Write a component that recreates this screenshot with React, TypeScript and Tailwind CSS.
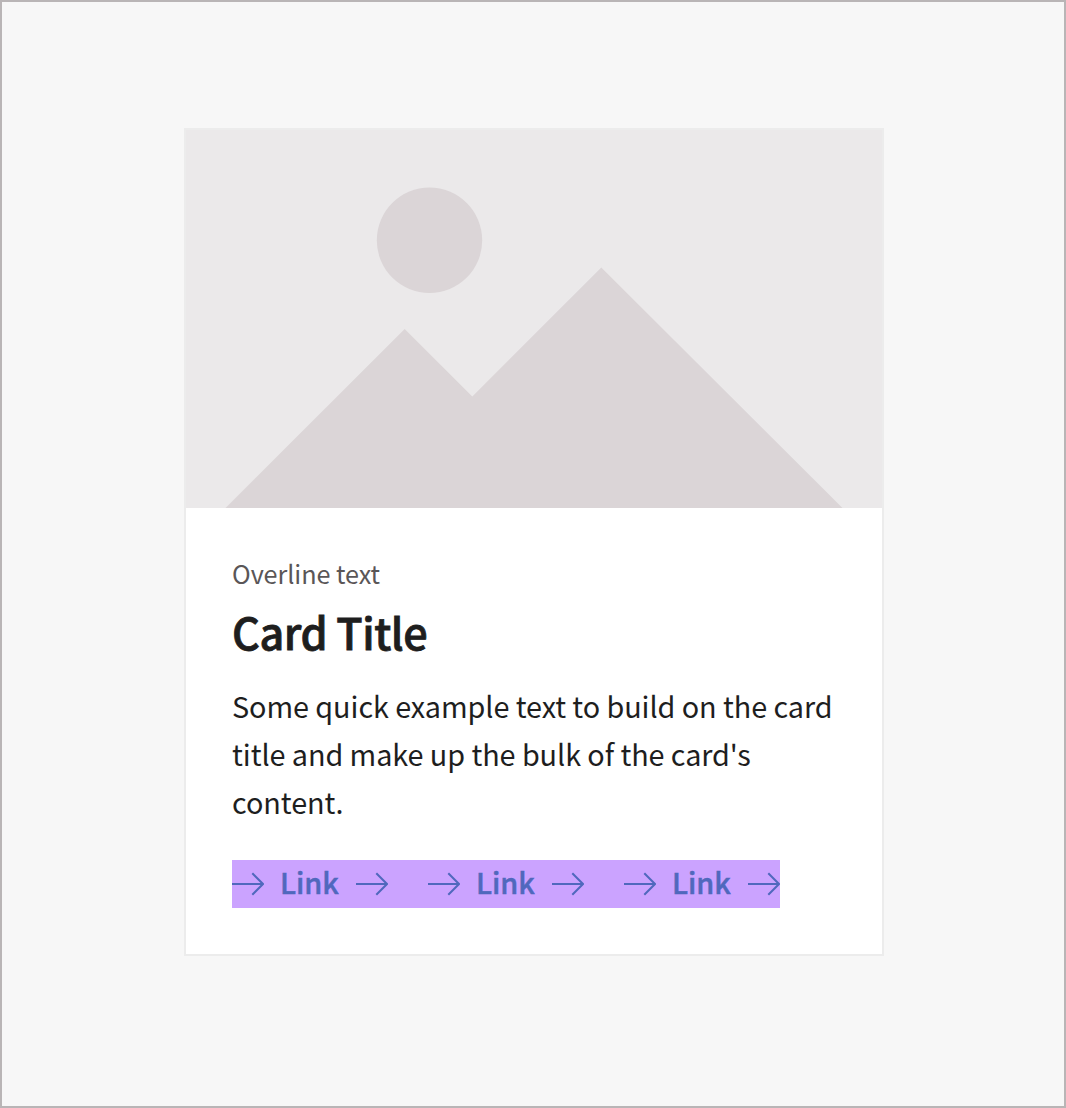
function Arrow() {
  return (
    <svg className="block size-8 shrink-0" viewBox="0 0 32 32" fill="none" stroke="#5068bd" strokeWidth="2">
      <path d="M0 16H31M20.3 5.3L31 16L20.3 26.7" />
    </svg>
  );
}

function CardLink() {
  return (
    <a className="flex h-12 items-center gap-4 text-[#5068bd]">
      <Arrow />
      <span className="h-12 w-[60px] whitespace-nowrap text-[28.8px] leading-[44px] font-medium [-webkit-text-stroke:0.5px_#5068bd]">Link</span>
      <Arrow />
    </a>
  );
}

export default function App() {
  return (
    <main className="h-[1108px] w-[1066px] border-2 border-[#b9b5b6] bg-[#f7f7f7] px-[182px] pt-[126px] font-['Noto_Sans_CJK_SC',sans-serif] text-[#1e1e1e]">
      <article className="h-[828px] w-[700px] border-2 border-[#ececec] bg-white">
        <svg className="block h-[378px] w-[696px] bg-[#ebe9ea]" viewBox="0 0 696 378" fill="#dbd5d7">
          <circle cx="243.5" cy="110.3" r="52.7" />
          <path d="M39.5 378L218.7 198.9L286.3 266.5L415.3 137.5L656.5 378Z" />
        </svg>
        <div className="px-[46px] pt-11">
          <p className="h-[42px] whitespace-nowrap text-[25.2px] leading-[42px] tracking-[-0.06px] text-[#5a5657]">Overline text</p>
          <h2 className="mt-[7px] h-[60px] whitespace-nowrap text-[43.2px] leading-[60px] font-medium tracking-[-0.5px] [-webkit-text-stroke:0.8px_#1e1e1e]">Card Title</h2>
          <p className="mt-[21px] text-[28.8px] leading-[48px] tracking-[-0.07px] whitespace-nowrap">
            Some quick example text to build on the card
            <br />
            title and make up the bulk of the card&apos;s
            <br />
            content.
          </p>
          <div className="mt-[34px] flex h-12 w-[548px] gap-10 bg-[#cba3ff]">
            <CardLink />
            <CardLink />
            <CardLink />
          </div>
        </div>
      </article>
    </main>
  );
}
